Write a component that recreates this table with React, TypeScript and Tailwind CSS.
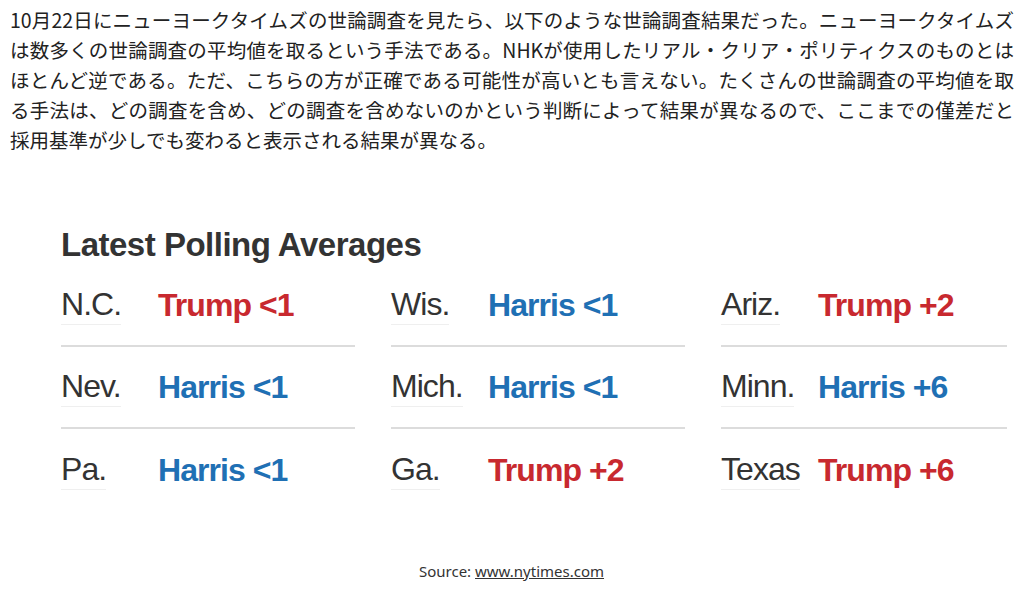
const COLUMNS = [
  [
    { state: "N.C.", text: "Trump <1", party: "r" },
    { state: "Nev.", text: "Harris <1", party: "d" },
    { state: "Pa.", text: "Harris <1", party: "d" },
  ],
  [
    { state: "Wis.", text: "Harris <1", party: "d" },
    { state: "Mich.", text: "Harris <1", party: "d" },
    { state: "Ga.", text: "Trump +2", party: "r" },
  ],
  [
    { state: "Ariz.", text: "Trump +2", party: "r" },
    { state: "Minn.", text: "Harris +6", party: "d" },
    { state: "Texas", text: "Trump +6", party: "r" },
  ],
];

// 本文は両端揃え（Chrome は CJK でも文字間を広げて揃える）
export default function App() {
  return (
    <div className="h-[589px] w-[1023px] overflow-hidden bg-white text-[#333]">
      <p className="w-[1014px] pl-[10px] pt-[5px] text-justify font-['Noto_Sans_CJK_JP',sans-serif] text-[19.5px] leading-[30px] text-[#222]">
        10月22日にニューヨークタイムズの世論調査を見たら、以下のような世論調査結果だった。ニューヨークタイムズは数多くの世論調査の平均値を取るという手法である。NHKが使用したリアル・クリア・ポリティクスのものとはほとんど逆である。ただ、こちらの方が正確である可能性が高いとも言えない。たくさんの世論調査の平均値を取る手法は、どの調査を含め、どの調査を含めないのかという判断によって結果が異なるので、ここまでの僅差だと採用基準が少しでも変わると表示される結果が異なる。
      </p>

      <figure className="mt-[72px]">
        <div className="pl-[61px] font-['Liberation_Sans',Arial,sans-serif]">
          <h2 className="text-[33px] font-bold leading-[36px] tracking-[-0.015em] text-[#333]">
            Latest Polling Averages
          </h2>
          <div className="mt-[2px] grid grid-cols-[294px_294px_286px] gap-x-[36px]">
            {COLUMNS.map((col, ci) => (
              <div key={ci} className="flex flex-col">
                {col.map((row, ri) => (
                  <div
                    key={row.state}
                    className={`flex h-[82px] items-center ${ri < col.length - 1 ? "border-b-2 border-[#dcdcdc]" : ""}`}
                  >
                    <span className="w-[97px] shrink-0">
                      <span className="inline-block border-b border-[#efefef] pb-[2px] text-[32px] leading-[36px] tracking-[-0.03em] text-[#333]">
                        {row.state}
                      </span>
                    </span>
                    <span
                      className={`text-[32px] font-bold leading-[36px] tracking-[-0.03em] ${row.party === "r" ? "text-[#c8292f]" : "text-[#1f70b4]"}`}
                    >
                      {row.text}
                    </span>
                  </div>
                ))}
              </div>
            ))}
          </div>
        </div>

        <figcaption className="mt-[49px] text-center font-['Noto_Sans',sans-serif] text-[15px] leading-[22px] text-[#333]">
          Source:{" "}
          <a href="#" className="underline">
            www.nytimes.com
          </a>
        </figcaption>
      </figure>
    </div>
  );
}
